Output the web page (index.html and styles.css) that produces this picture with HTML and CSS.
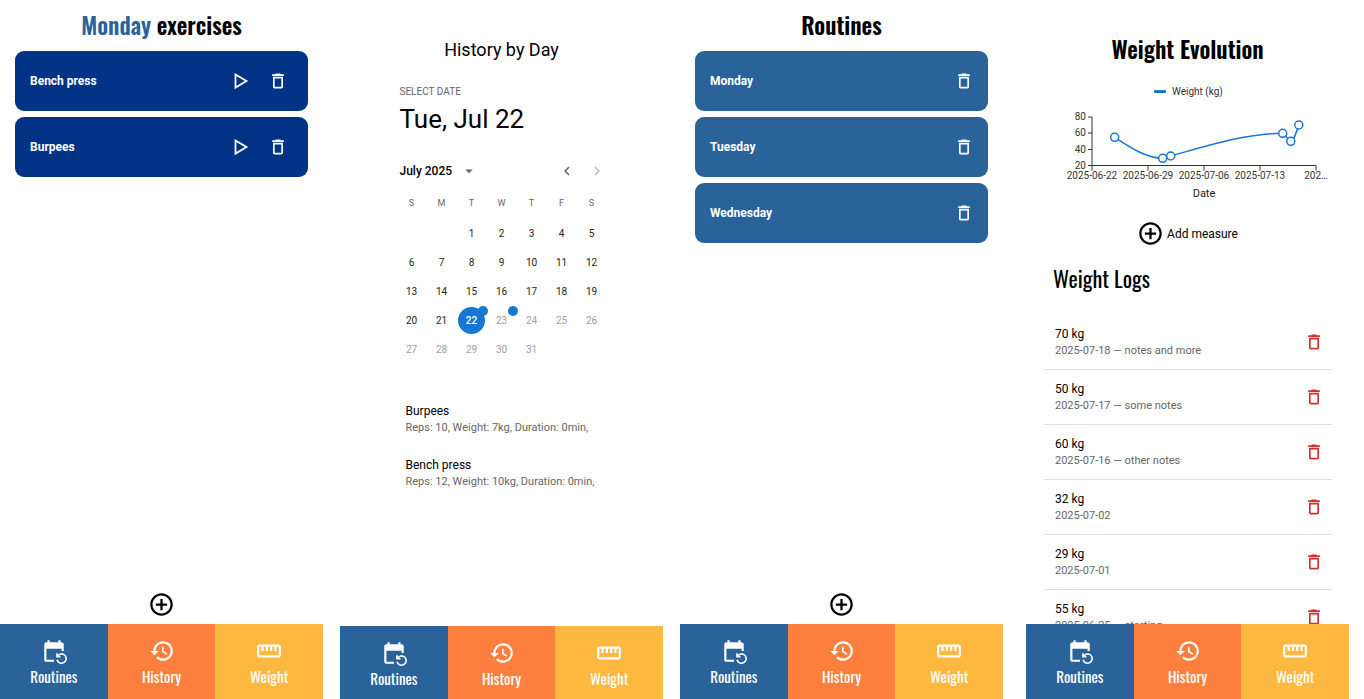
FILE: index.html
```html
<!DOCTYPE html>
<html lang="en">
<head>
<meta charset="utf-8">
<title>Workout tracker</title>
<link rel="stylesheet" href="styles.css">
</head>
<body>
<svg class="sprite" aria-hidden="true">
  <symbol id="trash" viewBox="0 0 24 24"><path d="M6 19c0 1.1.9 2 2 2h8c1.1 0 2-.9 2-2V7H6v12zM8 9h8v10H8V9zm7.5-5-1-1h-5l-1 1H5v2h14V4h-3.5z"/></symbol>
  <symbol id="play" viewBox="0 0 20 20"><path d="M5 4l10 6-10 6z" fill="none" stroke="currentColor" stroke-width="1.6"/></symbol>
  <symbol id="add" viewBox="0 0 24 24"><path d="M13 7h-2v4H7v2h4v4h2v-4h4v-2h-4V7zm-1-5C6.48 2 2 6.48 2 12s4.48 10 10 10 10-4.48 10-10S17.52 2 12 2zm0 18c-4.41 0-8-3.59-8-8s3.59-8 8-8 8 3.59 8 8-3.59 8-8 8z"/></symbol>
  <symbol id="routines" viewBox="0 0 24 24"><path d="M21 12V6c0-1.1-.9-2-2-2h-1V2h-2v2H8V2H6v2H5c-1.1 0-2 .9-2 2v14c0 1.1.9 2 2 2h7v-2H5V10h14v2h2zm-5.36 8c.43 1.45 1.77 2.5 3.36 2.5 1.93 0 3.5-1.57 3.5-3.5s-1.57-3.5-3.5-3.5c-.95 0-1.82.38-2.45 1H18V18h-4v-4h1.5v1.43c.9-.88 2.14-1.43 3.5-1.43 2.76 0 5 2.24 5 5s-2.24 5-5 5c-2.42 0-4.44-1.72-4.9-4h1.54z"/></symbol>
  <symbol id="history" viewBox="0 0 24 24"><path d="M13 3c-4.97 0-9 4.03-9 9H1l3.89 3.89.07.14L9 12H6c0-3.87 3.13-7 7-7s7 3.13 7 7-3.13 7-7 7c-1.93 0-3.68-.79-4.94-2.06l-1.42 1.42C8.27 19.99 10.51 21 13 21c4.97 0 9-4.03 9-9s-4.03-9-9-9zm-1 5v5l4.28 2.54.72-1.21-3.5-2.08V8H12z"/></symbol>
  <symbol id="ruler" viewBox="0 0 24 24"><path d="M21 6H3c-1.1 0-2 .9-2 2v8c0 1.1.9 2 2 2h18c1.1 0 2-.9 2-2V8c0-1.1-.9-2-2-2zm0 10H3V8h2v4h2V8h2v4h2V8h2v4h2V8h2v4h2V8h2v8z"/></symbol>
  <symbol id="left" viewBox="0 0 24 24"><path d="M15.41 7.41 14 6l-6 6 6 6 1.41-1.41L10.83 12z"/></symbol>
  <symbol id="right" viewBox="0 0 24 24"><path d="M10 6 8.59 7.41 13.17 12l-4.58 4.59L10 18l6-6z"/></symbol>
  <symbol id="down" viewBox="0 0 24 24"><path d="M7 10l5 5 5-5z"/></symbol>
</svg>

<section class="screen">
  <main class="content">
    <h1 class="title"><span class="title-day">Monday</span> exercises</h1>
    <ul class="cards">
      <li class="card card-exercise"><span class="card-name">Bench press</span><button class="icon-button" aria-label="Start Bench press"><svg class="icon-play"><use href="#play"/></svg></button><button class="icon-button" aria-label="Delete Bench press"><svg class="icon-small"><use href="#trash"/></svg></button></li>
      <li class="card card-exercise"><span class="card-name">Burpees</span><button class="icon-button" aria-label="Start Burpees"><svg class="icon-play"><use href="#play"/></svg></button><button class="icon-button" aria-label="Delete Burpees"><svg class="icon-small"><use href="#trash"/></svg></button></li>
    </ul>
    <button class="add-button" aria-label="Add exercise"><svg class="icon-add"><use href="#add"/></svg></button>
  </main>
  <nav class="tabs">
    <a class="tab tab-routines" href="#routines"><svg class="icon-tab"><use href="#routines"/></svg>Routines</a>
    <a class="tab tab-history" href="#history"><svg class="icon-tab"><use href="#history"/></svg>History</a>
    <a class="tab tab-weight" href="#weight"><svg class="icon-tab"><use href="#ruler"/></svg>Weight</a>
  </nav>
</section>

<section class="screen screen-history">
  <main class="content">
    <h1 class="history-title">History by Day</h1>
    <div class="picker">
      <p class="picker-label">SELECT DATE</p>
      <h2 class="picker-date">Tue, Jul 22</h2>
      <div class="month-bar">
        <button class="month-button">July 2025<svg class="icon-down"><use href="#down"/></svg></button>
        <button class="month-step" aria-label="Previous month"><svg class="icon-step"><use href="#left"/></svg></button>
        <button class="month-step" aria-label="Next month" disabled><svg class="icon-step"><use href="#right"/></svg></button>
      </div>
      <table class="calendar">
        <thead><tr><th>S</th><th>M</th><th>T</th><th>W</th><th>T</th><th>F</th><th>S</th></tr></thead>
        <tbody>
          <tr><td></td><td></td><td><button class="day">1</button></td><td><button class="day">2</button></td><td><button class="day">3</button></td><td><button class="day">4</button></td><td><button class="day">5</button></td></tr>
          <tr><td><button class="day">6</button></td><td><button class="day">7</button></td><td><button class="day">8</button></td><td><button class="day">9</button></td><td><button class="day">10</button></td><td><button class="day">11</button></td><td><button class="day">12</button></td></tr>
          <tr><td><button class="day">13</button></td><td><button class="day">14</button></td><td><button class="day">15</button></td><td><button class="day">16</button></td><td><button class="day">17</button></td><td><button class="day">18</button></td><td><button class="day">19</button></td></tr>
          <tr><td><button class="day">20</button></td><td><button class="day">21</button></td><td><button class="day day-selected day-marked">22</button></td><td><button class="day day-marked" disabled>23</button></td><td><button class="day" disabled>24</button></td><td><button class="day" disabled>25</button></td><td><button class="day" disabled>26</button></td></tr>
          <tr><td><button class="day" disabled>27</button></td><td><button class="day" disabled>28</button></td><td><button class="day" disabled>29</button></td><td><button class="day" disabled>30</button></td><td><button class="day" disabled>31</button></td><td></td><td></td></tr>
        </tbody>
      </table>
      <ul class="sessions">
        <li class="session"><p class="primary">Burpees</p><p class="secondary">Reps: 10, Weight: 7kg, Duration: 0min,</p></li>
        <li class="session"><p class="primary">Bench press</p><p class="secondary">Reps: 12, Weight: 10kg, Duration: 0min,</p></li>
      </ul>
    </div>
  </main>
  <nav class="tabs">
    <a class="tab tab-routines" href="#routines"><svg class="icon-tab"><use href="#routines"/></svg>Routines</a>
    <a class="tab tab-history" href="#history"><svg class="icon-tab"><use href="#history"/></svg>History</a>
    <a class="tab tab-weight" href="#weight"><svg class="icon-tab"><use href="#ruler"/></svg>Weight</a>
  </nav>
</section>

<section class="screen">
  <main class="content">
    <h1 class="title">Routines</h1>
    <ul class="cards">
      <li class="card card-routine"><span class="card-name">Monday</span><button class="icon-button" aria-label="Delete Monday"><svg class="icon-small"><use href="#trash"/></svg></button></li>
      <li class="card card-routine"><span class="card-name">Tuesday</span><button class="icon-button" aria-label="Delete Tuesday"><svg class="icon-small"><use href="#trash"/></svg></button></li>
      <li class="card card-routine"><span class="card-name">Wednesday</span><button class="icon-button" aria-label="Delete Wednesday"><svg class="icon-small"><use href="#trash"/></svg></button></li>
    </ul>
    <button class="add-button" aria-label="Add routine"><svg class="icon-add"><use href="#add"/></svg></button>
  </main>
  <nav class="tabs">
    <a class="tab tab-routines" href="#routines"><svg class="icon-tab"><use href="#routines"/></svg>Routines</a>
    <a class="tab tab-history" href="#history"><svg class="icon-tab"><use href="#history"/></svg>History</a>
    <a class="tab tab-weight" href="#weight"><svg class="icon-tab"><use href="#ruler"/></svg>Weight</a>
  </nav>
</section>

<section class="screen screen-weight">
  <main class="content">
    <h1 class="title weight-title">Weight Evolution</h1>
    <svg class="chart" viewBox="0 80 323 124" role="img" aria-label="Weight by date">
      <rect x="128" y="90" width="12" height="3" rx="1" fill="#1976d2"/>
      <text class="chart-legend" x="146" y="95">Weight (kg)</text>
      <path class="chart-axis" d="M62 117h4v48.500h224v5M62 133h4M62 149.500h4M62 165.500h4v5M122 165.500v5M178 165.500v5M234 165.500v5"/>
      <g class="chart-tick" text-anchor="end"><text x="60" y="120">80</text><text x="60" y="136">60</text><text x="60" y="153">40</text><text x="60" y="169">20</text></g>
      <g class="chart-tick" text-anchor="middle"><text x="66" y="179">2025-06-22</text><text x="122" y="179">2025-06-29</text><text x="178" y="179">2025-07-06</text><text x="234" y="179">2025-07-13</text><text x="290" y="179">202…</text></g>
      <text class="chart-label" x="178" y="197" text-anchor="middle">Date</text>
      <path class="chart-line" d="M88.700 137.300C104.700 147.800 120.700 158.300 136.700 158.300C139.400 158.300 142 156.700 144.700 156C182 145.500 219.400 133.300 256.700 133.300C259.400 133.300 262.100 141.300 264.800 141.300C267.500 141.300 270.100 133.200 272.800 125"/>
      <g class="chart-dots"><circle cx="88.700" cy="137.300" r="4"/><circle cx="136.700" cy="158.300" r="4"/><circle cx="144.700" cy="156" r="4"/><circle cx="256.700" cy="133.300" r="4"/><circle cx="264.800" cy="141.300" r="4"/><circle cx="272.800" cy="125" r="4"/></g>
    </svg>
    <button class="measure-button"><svg class="icon-add"><use href="#add"/></svg>Add measure</button>
    <h2 class="logs-title">Weight Logs</h2>
    <ul class="logs">
      <li class="log"><div class="log-text"><p class="primary">70 kg</p><p class="secondary">2025-07-18 — notes and more</p></div><button class="icon-button" aria-label="Delete 70 kg"><svg class="icon-small"><use href="#trash"/></svg></button></li>
      <li class="log"><div class="log-text"><p class="primary">50 kg</p><p class="secondary">2025-07-17 — some notes</p></div><button class="icon-button" aria-label="Delete 50 kg"><svg class="icon-small"><use href="#trash"/></svg></button></li>
      <li class="log"><div class="log-text"><p class="primary">60 kg</p><p class="secondary">2025-07-16 — other notes</p></div><button class="icon-button" aria-label="Delete 60 kg"><svg class="icon-small"><use href="#trash"/></svg></button></li>
      <li class="log"><div class="log-text"><p class="primary">32 kg</p><p class="secondary">2025-07-02</p></div><button class="icon-button" aria-label="Delete 32 kg"><svg class="icon-small"><use href="#trash"/></svg></button></li>
      <li class="log"><div class="log-text"><p class="primary">29 kg</p><p class="secondary">2025-07-01</p></div><button class="icon-button" aria-label="Delete 29 kg"><svg class="icon-small"><use href="#trash"/></svg></button></li>
      <li class="log"><div class="log-text"><p class="primary">55 kg</p><p class="secondary">2025-06-25 — starting</p></div><button class="icon-button" aria-label="Delete 55 kg"><svg class="icon-small"><use href="#trash"/></svg></button></li>
    </ul>
  </main>
  <nav class="tabs">
    <a class="tab tab-routines" href="#routines"><svg class="icon-tab"><use href="#routines"/></svg>Routines</a>
    <a class="tab tab-history" href="#history"><svg class="icon-tab"><use href="#history"/></svg>History</a>
    <a class="tab tab-weight" href="#weight"><svg class="icon-tab"><use href="#ruler"/></svg>Weight</a>
  </nav>
</section>
</body>
</html>
```
FILE: styles.css
```css
* {
  box-sizing: border-box;
  margin: 0;
  padding: 0;
}

body {
  display: flex;
  gap: 17px;
  height: 100vh;
  padding-right: 15px;
  overflow: hidden;
  background: #fff;
  color: #000;
  font-family: Roboto, "Liberation Sans", sans-serif;
}

ul { list-style: none; }

button {
  border: 0;
  background: none;
  color: inherit;
  font: inherit;
  cursor: pointer;
}

svg { display: block; fill: currentColor; }

.sprite { display: none; }

.screen {
  display: flex;
  flex: 1 1 0;
  flex-direction: column;
  min-width: 0;
}

.screen-history { margin-bottom: -2px; }
.screen-weight { margin-left: 6px; }

.content {
  display: flex;
  flex: 1;
  flex-direction: column;
  min-height: 0;
  overflow: hidden;
}

.title, .logs-title, .tab {
  font-family: Oswald, "Liberation Sans Narrow", "Liberation Sans", sans-serif;
}

.title {
  padding-top: 7px;
  font-size: 23px;
  font-weight: 600;
  line-height: 36px;
  text-align: center;
}

.title-day { color: #2a6399; }

.cards {
  display: flex;
  flex-direction: column;
  gap: 6px;
  padding: 8px 15px 0;
}

.card {
  display: flex;
  align-items: center;
  height: 60px;
  padding: 0 15px;
  border-radius: 9px;
  color: #fff;
}

.card-exercise { gap: 7px; background: #003285; }
.card-routine { padding-right: 9px; background: #2a629a; }

.card-name {
  flex: 1;
  font-size: 12px;
  font-weight: 700;
}

.icon-button {
  display: grid;
  place-items: center;
  width: 30px;
  height: 30px;
}

.icon-small { width: 20px; height: 20px; }
.icon-play { width: 22px; height: 22px; }
.icon-add { width: 27px; height: 27px; }
.icon-tab { width: 26px; height: 26px; }
.icon-step, .icon-down { width: 18px; height: 18px; }

.add-button {
  align-self: center;
  margin-top: auto;
  margin-bottom: 6px;
}

.tabs {
  display: flex;
  flex: none;
  height: 75px;
}

.tab {
  display: flex;
  flex: 1;
  flex-direction: column;
  align-items: center;
  padding-top: 14px;
  color: #fff;
  font-size: 15px;
  line-height: 24px;
  text-decoration: none;
}

.tab-routines { background: #2a629a; }
.tab-history { background: #ff7f3e; }
.tab-weight { background: #ffb840; }

.history-title {
  padding-top: 38px;
  font-size: 18px;
  font-weight: 400;
  line-height: 24px;
  text-align: center;
}

.picker {
  width: 210px;
  margin: 23px auto 0;
}

.picker-label {
  color: #666;
  font-size: 10px;
  line-height: 14px;
}

.picker-date {
  padding-top: 4px;
  font-size: 26px;
  font-weight: 400;
  line-height: 32px;
}

.month-bar, .picker-label, .picker-date { margin-left: 3px; }

.month-bar {
  display: flex;
  align-items: center;
  height: 30px;
  margin-top: 21px;
  margin-right: -5px;
}

.month-button {
  display: flex;
  align-items: center;
  gap: 8px;
  margin-right: auto;
  font-size: 12px;
  font-weight: 500;
}

.month-step {
  display: grid;
  place-items: center;
  width: 30px;
  height: 30px;
}

.icon-down, .month-step { color: #666; }
.month-step:disabled { color: #bbb; }

.calendar {
  border-collapse: collapse;
  table-layout: fixed;
  width: 210px;
}

.calendar th {
  height: 33px;
  color: #666;
  font-size: 9px;
  font-weight: 400;
}

.calendar td {
  height: 29px;
}

.day {
  display: block;
  position: relative;
  width: 27px;
  height: 27px;
  margin: 0 auto;
  border-radius: 50%;
  color: #222;
  font-size: 10px;
}

.day:disabled { color: #a0a0a0; }

.day-selected {
  background: #1976d2;
  color: #fff;
  font-weight: 500;
}

.day-marked::after {
  position: absolute;
  top: -1px;
  right: -3px;
  width: 10px;
  height: 10px;
  border-radius: 50%;
  background: #1976d2;
  content: "";
}

.sessions { padding: 38px 0 0 9px; }

.session {
  height: 54px;
  white-space: nowrap;
}

.primary {
  font-size: 12px;
  line-height: 18px;
}

.secondary {
  color: #666;
  font-size: 11px;
  line-height: 16px;
}

.weight-title { padding-top: 31px; }

.chart {
  flex: none;
  width: 100%;
  margin-top: 13px;
}

.chart-tick { fill: #333; font-size: 10px; }
.chart-legend { fill: #333; font-size: 10px; }
.chart-label { fill: #222; font-size: 11px; }
.chart-axis { fill: none; stroke: #333; stroke-width: 1; }
.chart-line { fill: none; stroke: #1976d2; stroke-width: 1.5; }
.chart-dots { fill: #fff; stroke: #1976d2; stroke-width: 1.5; }

.measure-button {
  display: flex;
  align-items: center;
  align-self: center;
  gap: 3px;
  margin-top: 16px;
  font-size: 12px;
}

.logs-title {
  padding: 15px 27px 0;
  font-size: 22px;
  font-weight: 400;
  line-height: 32px;
}

.logs { padding: 21px 17px 0; }

.log {
  display: flex;
  align-items: center;
  height: 55px;
  padding: 0 3px 0 12px;
  border-bottom: 1px solid #e0e0e0;
}

.log-text { flex: 1; }
.log .icon-button { color: #d32f2f; }
```
